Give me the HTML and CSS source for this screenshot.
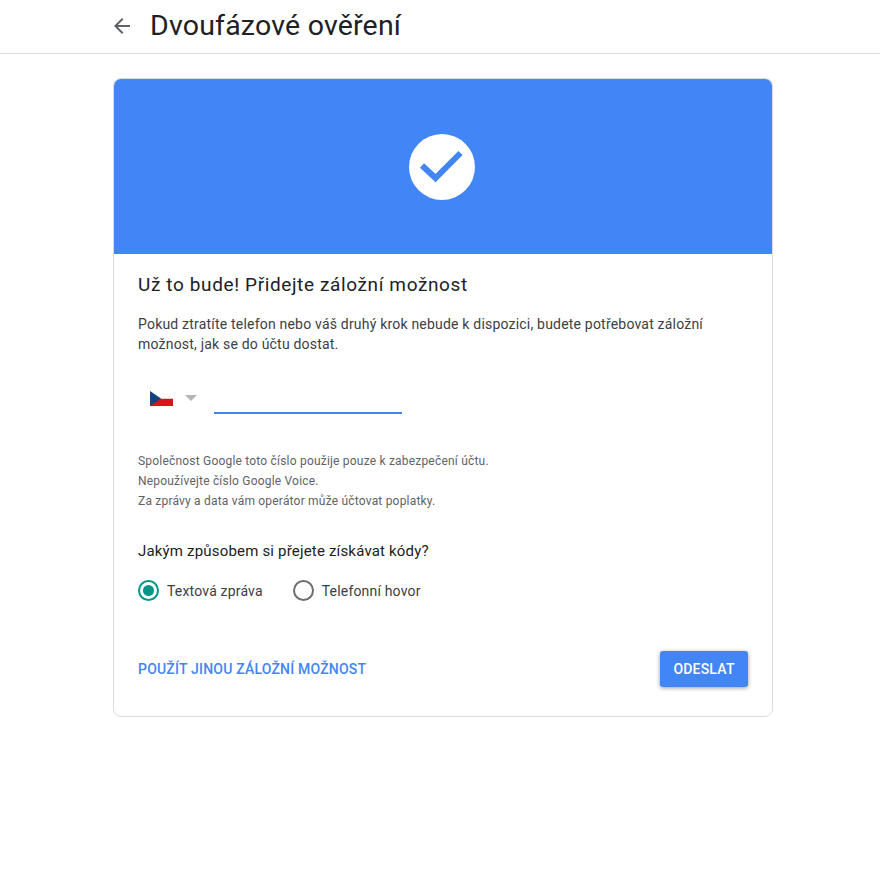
FILE: index.html
```html
<!DOCTYPE html>
<html lang="cs">

<head>
    <meta charset="UTF-8">
    <title>Dvoufázové ověření</title>
    <link rel="stylesheet" href="styles.css">
</head>

<body>
    <header class="top-bar">
        <svg class="back-icon" width="24" height="24" viewBox="0 0 24 24">
            <path d="M20 11H7.83l5.59-5.59L12 4l-8 8 8 8 1.41-1.41L7.83 13H20v-2z" fill="#5f6368"></path>
        </svg>
        <h1 class="page-title">Dvoufázové ověření</h1>
    </header>

    <main class="card">
        <div class="card-banner">
            <div class="check-circle">
                <svg width="46" height="46" viewBox="0 0 46 46">
                    <path d="M3 21.5 L16.5 34 L41.5 9" fill="none" stroke="#4285f4" stroke-width="6"></path>
                </svg>
            </div>
        </div>

        <div class="card-body">
            <h2 class="card-title">Už to bude! Přidejte záložní možnost</h2>
            <p class="intro">Pokud ztratíte telefon nebo váš druhý krok nebude k dispozici, budete potřebovat záložní možnost, jak se do účtu dostat.</p>

            <div class="phone-row">
                <svg class="flag" width="23" height="15" viewBox="0 0 23 15">
                    <rect y="7.5" width="23" height="7.5" fill="#d7141a"></rect>
                    <rect width="23" height="7.5" fill="#fff"></rect>
                    <path d="M0 0 L11 7.5 L0 15 Z" fill="#11457e"></path>
                </svg>
                <span class="caret"></span>
                <div class="phone-input"></div>
            </div>

            <div class="notes">
                <p>Společnost Google toto číslo použije pouze k zabezpečení účtu.</p>
                <p>Nepoužívejte číslo Google Voice.</p>
                <p>Za zprávy a data vám operátor může účtovat poplatky.</p>
            </div>

            <h3 class="question">Jakým způsobem si přejete získávat kódy?</h3>

            <div class="radio-group">
                <div class="radio-item">
                    <span class="radio checked"></span>
                    <span>Textová zpráva</span>
                </div>
                <div class="radio-item">
                    <span class="radio"></span>
                    <span>Telefonní hovor</span>
                </div>
            </div>

            <div class="actions">
                <a class="link-button" href="#">POUŽÍT JINOU ZÁLOŽNÍ MOŽNOST</a>
                <button class="send-button">ODESLAT</button>
            </div>
        </div>
    </main>
</body>

</html>
```

FILE: styles.css
```css
* {
    margin: 0;
    padding: 0;
    box-sizing: border-box;
}

body {
    font-family: Roboto, "Liberation Sans", sans-serif;
    color: #202124;
    background-color: #fff;
}

.top-bar {
    height: 54px;
    border-bottom: 1px solid #dadce0;
    padding: 0 0 2px 110px;
    display: flex;
    align-items: center;
}

.back-icon {
    margin-right: 16px;
}

.page-title {
    font-size: 28.5px;
    font-weight: 400;
    letter-spacing: 0.2px;
}

.card {
    width: 660px;
    height: 639px;
    margin: 24px 0 0 113px;
    border: 1px solid #dadce0;
    border-radius: 8px;
    overflow: hidden;
}

.card-banner {
    height: 175px;
    padding-right: 2px;
    background-color: #4285f4;
    display: flex;
    align-items: center;
    justify-content: center;
}

.check-circle {
    width: 66px;
    height: 66px;
    border-radius: 50%;
    background-color: #fff;
    display: flex;
    align-items: center;
    justify-content: center;
}

.card-body {
    padding: 19px 24px 0;
}

.card-title {
    font-size: 19px;
    font-weight: 400;
    line-height: 24px;
    letter-spacing: 0.62px;
}

.intro {
    font-size: 14px;
    line-height: 20px;
    letter-spacing: 0.2px;
    margin-top: 17px;
    color: #3c4043;
}

.phone-row {
    display: flex;
    align-items: center;
    height: 40px;
    margin-top: 24px;
    padding-left: 12px;
}

.flag {
    margin-right: 12px;
}

.caret {
    width: 0;
    height: 0;
    border-left: 6px solid transparent;
    border-right: 6px solid transparent;
    border-top: 6px solid #b5b5b5;
    margin-right: 17px;
}

.phone-input {
    width: 188px;
    height: 22px;
    margin-top: 10px;
    border-bottom: 2px solid #4285f4;
}

.notes {
    margin-top: 33px;
    font-size: 12px;
    line-height: 20px;
    letter-spacing: 0.2px;
    color: #5f6368;
}

.question {
    font-size: 15px;
    font-weight: 400;
    line-height: 20px;
    letter-spacing: 0.18px;
    margin-top: 30px;
}

.radio-group {
    display: flex;
    gap: 30px;
    margin-top: 19px;
}

.radio-item {
    display: flex;
    align-items: center;
    gap: 8px;
    font-size: 14px;
    line-height: 20px;
    letter-spacing: 0.18px;
    color: #3c4043;
}

.radio {
    width: 21px;
    height: 21px;
    border: 2px solid #6e6e6e;
    border-radius: 50%;
    display: flex;
    align-items: center;
    justify-content: center;
}

.radio.checked {
    border-color: #009688;
}

.radio.checked::after {
    content: "";
    width: 11px;
    height: 11px;
    border-radius: 50%;
    background-color: #009688;
}

.actions {
    display: flex;
    align-items: center;
    justify-content: space-between;
    margin-top: 50px;
}

.link-button {
    font-size: 14px;
    font-weight: 500;
    letter-spacing: 0.2px;
    color: #4285f4;
    text-decoration: none;
}

.send-button {
    width: 88px;
    height: 36px;
    border: none;
    border-radius: 3px;
    background-color: #4285f4;
    color: #fff;
    font-family: inherit;
    font-size: 14px;
    font-weight: 500;
    letter-spacing: 0.2px;
    box-shadow: 0 1px 4px rgba(0, 0, 0, 0.4);
}
```
